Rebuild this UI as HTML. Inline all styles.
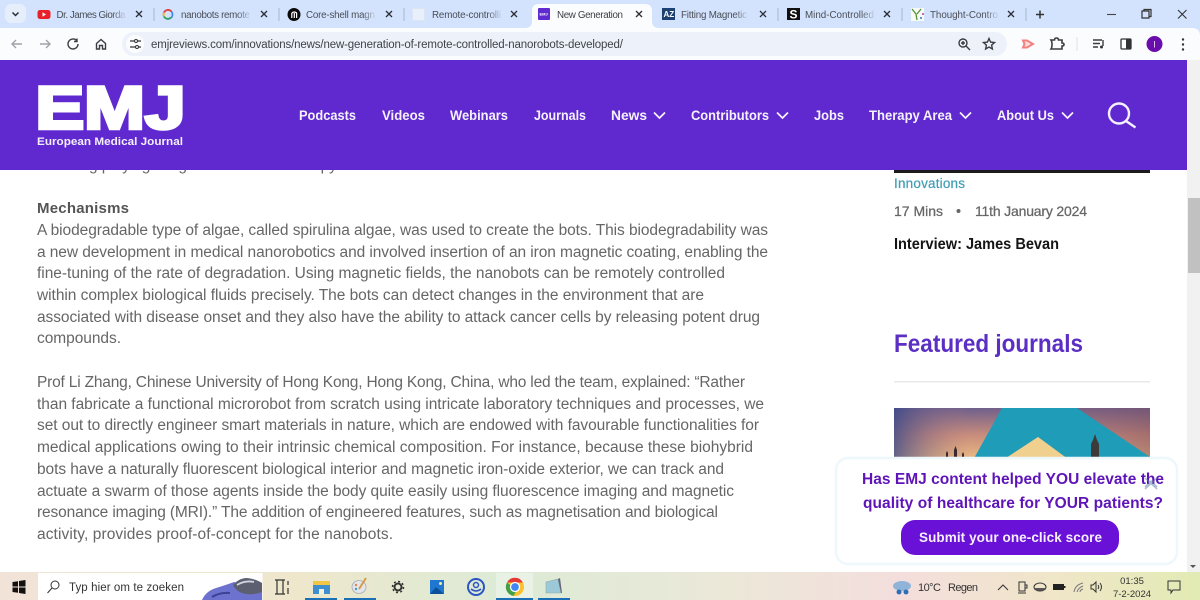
<!DOCTYPE html>
<html><head><meta charset="utf-8"><title>New Generation of Remote-Controlled Nanorobots Developed</title>
<style>
html,body{margin:0;padding:0;width:1200px;height:600px;overflow:hidden;background:#fff}
svg{display:block;position:absolute;left:0;top:0;filter:blur(.3px)}
text{font-family:"Liberation Sans",sans-serif}
.tab{font-size:9.8px;fill:#4a4e55}
.x{stroke:#2a2d33;stroke-width:1.3;fill:none}
.sep{stroke:#a5b7d3;stroke-width:1}
.b{font-size:15.5px;fill:#666}
.n{font-size:13.5px;font-weight:700;fill:#f6f2fd}
.c{stroke:#f6f2fd;stroke-width:1.7;fill:none}
.ic{stroke:#3a3d42;stroke-width:1.4;fill:none}
.tb{stroke:#333;stroke-width:1;fill:none}
.pop{font-size:15.5px;font-weight:700;fill:#5f14b8}
</style></head>
<body>
<svg width="1200" height="600" viewBox="0 0 1200 600" xmlns="http://www.w3.org/2000/svg">
<defs>
<linearGradient id="sky" x1="0" y1="0" x2="0" y2="1"><stop offset="0" stop-color="#6d5f8c"/><stop offset=".5" stop-color="#c98d7c"/><stop offset="1" stop-color="#eec084"/></linearGradient>
<linearGradient id="sky2" x1="0" y1="0" x2="1" y2="0"><stop offset="0" stop-color="#34468a" stop-opacity=".75"/><stop offset=".3" stop-color="#b47a80" stop-opacity="0"/><stop offset="1" stop-color="#7a4a5c" stop-opacity=".45"/></linearGradient>
<linearGradient id="task" x1="0" y1="0" x2="1" y2="0"><stop offset="0" stop-color="#f1e3d8"/><stop offset=".25" stop-color="#eee7cc"/><stop offset=".42" stop-color="#dcebd6"/><stop offset=".6" stop-color="#ebe8d8"/><stop offset=".75" stop-color="#f4dedd"/><stop offset=".88" stop-color="#f0e6c8"/><stop offset="1" stop-color="#e2ebb4"/></linearGradient>
<linearGradient id="fade" x1="0" y1="0" x2="1" y2="0"><stop offset="0" stop-color="#d3e3fd" stop-opacity="0"/><stop offset="1" stop-color="#d3e3fd"/></linearGradient>
</defs>

<!-- Page body text -->
<text class="b" x="37" y="170" textLength="303">including playing a significant role in therapy.</text>
<text x="37" y="213" font-size="15" font-weight="700" fill="#555" textLength="92">Mechanisms</text>
<text class="b" x="37" y="235" textLength="731">A biodegradable type of algae, called spirulina algae, was used to create the bots. This biodegradability was</text>
<text class="b" x="37" y="257" textLength="731">a new development in medical nanorobotics and involved insertion of an iron magnetic coating, enabling the</text>
<text class="b" x="37" y="278" textLength="688">fine-tuning of the rate of degradation. Using magnetic fields, the nanobots can be remotely controlled</text>
<text class="b" x="37" y="300" textLength="667">within complex biological fluids precisely. The bots can detect changes in the environment that are</text>
<text class="b" x="37" y="322" textLength="723">associated with disease onset and they also have the ability to attack cancer cells by releasing potent drug</text>
<text class="b" x="37" y="343" textLength="84">compounds.</text>
<text class="b" x="37" y="387" textLength="708">Prof Li Zhang, Chinese University of Hong Kong, Hong Kong, China, who led the team, explained: “Rather</text>
<text class="b" x="37" y="409" textLength="727">than fabricate a functional microrobot from scratch using intricate laboratory techniques and processes, we</text>
<text class="b" x="37" y="430" textLength="722">set out to directly engineer smart materials in nature, which are endowed with favourable functionalities for</text>
<text class="b" x="37" y="452" textLength="716">medical applications owing to their intrinsic chemical composition. For instance, because these biohybrid</text>
<text class="b" x="37" y="474" textLength="687">bots have a naturally fluorescent biological interior and magnetic iron-oxide exterior, we can track and</text>
<text class="b" x="37" y="496" textLength="697">actuate a swarm of those agents inside the body quite easily using fluorescence imaging and magnetic</text>
<text class="b" x="37" y="517" textLength="681">resonance imaging (MRI).” The addition of engineered features, such as magnetisation and biological</text>
<text class="b" x="37" y="539" textLength="356">activity, provides proof-of-concept for the nanobots.</text>

<!-- Sidebar -->
<rect x="894" y="168" width="256" height="5" fill="#1d1a1c"/>
<text x="894" y="188" font-size="13.5" fill="#3e9db5" stroke="#3e9db5" stroke-width=".2" textLength="71">Innovations</text>
<text x="894" y="216" font-size="14" fill="#666" stroke="#666" stroke-width=".25" textLength="49">17 Mins</text>
<circle cx="958.500" cy="211" r="2" fill="#666"/>
<text x="975" y="216" font-size="14" fill="#666" stroke="#666" stroke-width=".25" textLength="112">11th January 2024</text>
<text x="894" y="249" font-size="15.500" font-weight="700" fill="#151515" textLength="165" lengthAdjust="spacingAndGlyphs">Interview: James Bevan</text>
<text x="894" y="352" font-size="25" font-weight="700" fill="#5b2fc4" textLength="189" lengthAdjust="spacingAndGlyphs">Featured journals</text>
<rect x="894" y="381" width="256" height="1.500" fill="#e9e9e9"/>
<rect x="894" y="408" width="256" height="54" fill="url(#sky)"/>
<rect x="894" y="408" width="256" height="54" fill="url(#sky2)"/>
<path d="M946 458v-5l1-2 1 2v5zM954 458v-8l1.500-4 1.500 4v8zM962 458v-4l1-2 1 2v4z" fill="#3a2a30"/>
<path d="M1002 408h75l73 49v5h-78l-34-25-38 25h-28z" fill="#1f9cb8"/>
<path d="M1038 437l34 25h-72z" fill="#efd08e"/>
<path d="M1091 458v-14l2-4 2-6 2 6 2 4v14z" fill="#3d3a3a"/>

<!-- Scrollbar -->
<rect x="1187" y="60" width="13" height="512" fill="#f1f1f1"/>
<rect x="1188" y="198" width="12" height="75" fill="#c1c1c1"/>
<path d="M1190 565h6l-3 3z" fill="#555"/>

<!-- Header -->
<rect x="0" y="60" width="1187" height="110" fill="#5f29cf"/>
<text x="35.500" y="128.500" font-size="60" font-weight="700" fill="#fff" stroke="#fff" stroke-width="3.500" textLength="150" lengthAdjust="spacingAndGlyphs">EMJ</text>
<text x="37" y="145" font-size="11" font-weight="700" fill="#f3eefc" textLength="146" lengthAdjust="spacingAndGlyphs">European Medical Journal</text>
<text class="n" x="299" y="120" textLength="57" lengthAdjust="spacingAndGlyphs">Podcasts</text>
<text class="n" x="382" y="120" textLength="43" lengthAdjust="spacingAndGlyphs">Videos</text>
<text class="n" x="450" y="120" textLength="58" lengthAdjust="spacingAndGlyphs">Webinars</text>
<text class="n" x="534" y="120" textLength="52" lengthAdjust="spacingAndGlyphs">Journals</text>
<text class="n" x="611" y="120" textLength="36" lengthAdjust="spacingAndGlyphs">News</text>
<path class="c" d="M654 112.500l5.500 5.500 5.500-5.500"/>
<text class="n" x="691" y="120" textLength="78" lengthAdjust="spacingAndGlyphs">Contributors</text>
<path class="c" d="M777 112.500l5.500 5.500 5.500-5.500"/>
<text class="n" x="814" y="120" textLength="30" lengthAdjust="spacingAndGlyphs">Jobs</text>
<text class="n" x="869" y="120" textLength="83" lengthAdjust="spacingAndGlyphs">Therapy Area</text>
<path class="c" d="M960 112.500l5.500 5.500 5.500-5.500"/>
<text class="n" x="997" y="120" textLength="57" lengthAdjust="spacingAndGlyphs">About Us</text>
<path class="c" d="M1062 112.500l5.500 5.500 5.500-5.500"/>
<circle cx="1119" cy="113.500" r="10" fill="none" stroke="#f6f2fd" stroke-width="2.400"/>
<path d="M1126 121l9.500 6.500" stroke="#f6f2fd" stroke-width="2.400" fill="none"/>

<!-- Browser chrome -->
<rect width="1200" height="28" fill="#d3e3fd"/>
<rect y="28" width="1200" height="32" fill="#fbfcfe"/>
<path d="M1192 28q8 0 8 8v-8z" fill="#d3e3fd"/>
<rect x="5" y="4" width="21" height="19" rx="6" fill="#e6eefc"/>
<path class="x" style="stroke-width:1.500" d="M12.500 12.500l3 3 3-3"/>

<rect x="37.500" y="10" width="13" height="9" rx="2.500" fill="#e8202a"/><path d="M42.500 12.300l3.500 2.200-3.500 2.200z" fill="#fff"/>
<text class="tab" x="56.500" y="18" textLength="69">Dr. James Giorda</text>
<rect x="112" y="8" width="15" height="13" fill="url(#fade)"/>
<path class="x" d="M136 11l6 6M142 11l-6 6"/>
<line class="sep" x1="154" y1="8" x2="154" y2="21"/>

<circle cx="168" cy="14.500" r="4.500" fill="none" stroke="#4285f4" stroke-width="1.700"/><path d="M171.500 11.500a4.500 4.500 0 0 0-7.500 1" fill="none" stroke="#ea4335" stroke-width="1.700"/><path d="M164 12.500a4.500 4.500 0 0 0 0 4" fill="none" stroke="#fbbc05" stroke-width="1.700"/><path d="M164 16.500a4.500 4.500 0 0 0 7 1" fill="none" stroke="#34a853" stroke-width="1.700"/>
<text class="tab" x="181" y="18" textLength="69">nanobots remote</text>
<rect x="237" y="8" width="15" height="13" fill="url(#fade)"/>
<path class="x" d="M261 11l6 6M267 11l-6 6"/>
<line class="sep" x1="279" y1="8" x2="279" y2="21"/>

<circle cx="294" cy="14.500" r="6.500" fill="#0a0a0a"/><path d="M291.800 18v-5M294.300 18v-5M291.800 13q2.500-2 4.800 0v5" stroke="#fff" stroke-width="1.200" fill="none"/>
<text class="tab" x="306" y="18" textLength="69">Core-shell magn</text>
<rect x="362" y="8" width="15" height="13" fill="url(#fade)"/>
<path class="x" d="M386 11l6 6M392 11l-6 6"/>
<line class="sep" x1="404" y1="8" x2="404" y2="21"/>

<rect x="412.500" y="8.500" width="12" height="12" fill="#e9f0fb" stroke="#dbe5f3"/>
<text class="tab" x="432" y="18" textLength="69">Remote-controlli</text>
<rect x="488" y="8" width="15" height="13" fill="url(#fade)"/>
<path class="x" d="M511 11l6 6M517 11l-6 6"/>

<path d="M525 28q7 0 7-7V11q0-7 7-7h106q7 0 7 7v10q0 7 7 7z" fill="#fbfcfe"/>
<rect x="538" y="8" width="12" height="12" rx="1" fill="#5f2bd0"/>
<text x="539.500" y="15.500" font-size="4" font-weight="700" fill="#fff">EMJ</text>
<text class="tab" x="557" y="18" textLength="66" style="fill:#3c4045">New Generation</text>
<path class="x" d="M636 11l6 6M642 11l-6 6"/>

<rect x="662" y="8" width="13" height="12" fill="#1d4170"/><text x="663.500" y="17" font-size="8" font-weight="700" fill="#fff">AZ</text>
<text class="tab" x="681" y="18" textLength="66">Fitting Magnetic</text>
<rect x="735" y="8" width="14" height="13" fill="url(#fade)"/>
<path class="x" d="M760 11l6 6M766 11l-6 6"/>
<line class="sep" x1="778" y1="8" x2="778" y2="21"/>

<rect x="787" y="8" width="13" height="12" fill="#111"/><text x="789.500" y="18.500" font-size="12" font-weight="700" fill="#fff">S</text>
<text class="tab" x="805" y="18" textLength="69">Mind-Controlled</text>
<rect x="861" y="8" width="15" height="13" fill="url(#fade)"/>
<path class="x" d="M884 11l6 6M890 11l-6 6"/>
<line class="sep" x1="902" y1="8" x2="902" y2="21"/>

<rect x="911" y="8" width="13" height="13" fill="#f7fbf5"/><path d="M912 9l4 5 1 6M921 9l-4 5" stroke="#5a8f3a" stroke-width="1.300" fill="none"/><circle cx="923" cy="14" r="1" fill="#c03a8a"/><circle cx="921" cy="18" r="1" fill="#2a76c0"/>
<text class="tab" x="930" y="18" textLength="68">Thought-Contro</text>
<rect x="985" y="8" width="15" height="13" fill="url(#fade)"/>
<path class="x" d="M1008 11l6 6M1014 11l-6 6"/>
<line class="sep" x1="1026" y1="8" x2="1026" y2="21"/>
<path d="M1036 14.500h8M1040 10.500v8" stroke="#333" stroke-width="1.500" fill="none"/>
<path d="M1107 14.500h9" stroke="#444" stroke-width="1.100"/>
<path d="M1142 11h7v7h-7zM1144 11V9.500h7v7h-2" stroke="#333" stroke-width="1.200" fill="none"/>
<path d="M1178 10l8.500 8.500M1186.500 10l-8.500 8.500" stroke="#333" stroke-width="1.100" fill="none"/>

<!-- Toolbar -->
<path class="ic" style="stroke:#a0a4aa" d="M22 44H12M16 40l-4 4 4 4"/>
<path class="ic" style="stroke:#a0a4aa" d="M40 44h10M46 40l4 4-4 4"/>
<path class="ic" d="M78 44a5 5 0 1 1-1.500-3.600M77 38.500v3h-3"/>
<path class="ic" d="M96.500 43.500l4.500-4 4.500 4v5.500h-3v-3.500h-3v3.500h-3z"/>
<rect x="122" y="32" width="885" height="24" rx="12" fill="#edf2fa"/>
<circle cx="135" cy="44" r="9" fill="#fbfcfe"/>
<path d="M130 41h4M130 47h5M137 41h4M139 47h2" stroke="#333" stroke-width="1.200" fill="none"/><circle cx="136" cy="41" r="1.500" fill="none" stroke="#333"/><circle cx="137" cy="47" r="1.500" fill="none" stroke="#333"/>
<text x="151" y="48" font-size="11.500" fill="#3f4248" textLength="472">emjreviews.com/innovations/news/new-generation-of-remote-controlled-nanorobots-developed/</text>
<circle cx="963" cy="43" r="4" class="ic"/><path class="ic" d="M966 46l4 4M961 43h4M963 41v4"/>
<path d="M989 38.500l1.600 3.600 3.900.4-2.900 2.600.8 3.900-3.400-2-3.400 2 .8-3.900-2.900-2.600 3.900-.4z" class="ic"/>
<path d="M1023 40.500h4l6 3.500-6 3.500h-4l1.500-3.500z" fill="#fbdcdc" stroke="#f0827f" stroke-width="2"/>
<path class="ic" style="stroke-width:1.600" d="M1051 40h3.500q0-2 2-2t2 2h3.500v3q2 0 2 1.500t-2 1.500v3h-11q1-1.500 1-4.500t-1-4.500z"/>
<line x1="1077" y1="37" x2="1077" y2="51" stroke="#dde3ea"/>
<path class="ic" d="M1093 40h9M1093 43.500h7M1093 47h5M1103 40v6"/><circle cx="1101.500" cy="47" r="1.500" fill="#333"/>
<rect x="1121" y="39" width="10" height="10" rx="1" fill="#fff" stroke="#333" stroke-width="1.300"/><rect x="1126" y="39" width="5" height="10" fill="#333"/>
<circle cx="1154.500" cy="44" r="8" fill="#6a0dad"/><text x="1154.500" y="47.500" font-size="9" fill="#eadcf7" text-anchor="middle">I</text>
<circle cx="1183" cy="39.500" r="1.200" fill="#333"/><circle cx="1183" cy="44.500" r="1.200" fill="#333"/><circle cx="1183" cy="49.500" r="1.200" fill="#333"/>

<!-- Popup -->
<rect x="836" y="458" width="341" height="106" rx="12" fill="#fff" stroke="#eef7fc" stroke-width="2.500"/>
<text class="pop" x="862" y="484" textLength="302">Has EMJ content helped YOU elevate the</text>
<text class="pop" x="863" y="508" textLength="300">quality of healthcare for YOUR patients?</text>
<path d="M1145 487l6-6 6 6M1145 478l12 11M1157 478l-12 11" stroke="#5a7fa8" stroke-opacity=".55" stroke-width="1.500" fill="none"/>
<rect x="901" y="520" width="218" height="35" rx="14" fill="#6a11d8"/>
<text x="919" y="542" font-size="13.500" font-weight="700" fill="#f6effd" textLength="183">Submit your one-click score</text>

<!-- Taskbar -->
<rect y="572" width="1200" height="28" fill="url(#task)"/>
<path d="M12.500 582l5.500-.8v5.300h-5.500zM19 581l6.500-1v6.500H19zM12.500 587.500H18v5.300l-5.500-.8zM19 587.500h6.500v6.500l-6.500-1z" fill="#111"/>
<rect x="38" y="573" width="224.500" height="27" fill="#fff"/>
<circle cx="55" cy="585" r="4" class="tb"/><path class="tb" d="M52 588l-4.500 5"/>
<text x="69" y="591" font-size="11.500" fill="#333" textLength="115">Typ hier om te zoeken</text>
<path d="M202 600q4-9 14-12t18-6l28 8v10z" fill="#6d72cf"/>
<path d="M212 597q8-5 18-4" stroke="#3c4296" stroke-width="2" fill="none"/>
<path d="M233 585q6-7 14-7 9 1 15 5v9q-7 3-15 2-10-1-14-9z" fill="#5c5f70"/>
<path d="M237 585q8-5 17-3" stroke="#d1d4de" stroke-width="1.800" fill="none"/>

<path class="tb" style="stroke-width:1.200" d="M275 580h10M275 594h10M277 580v14M283 580v14M288 581v4M288 588v6"/>
<rect x="313" y="581" width="17" height="11" fill="#f3c545"/><rect x="313" y="585" width="17" height="9" fill="#3d8fd0"/><rect x="319" y="589" width="5" height="5" fill="#f4efd8"/>
<ellipse cx="359" cy="587" rx="7" ry="6.500" fill="#e3e6ea" stroke="#a7aab0" stroke-width=".8"/><path d="M359 589l7-11" stroke="#d69a4d" stroke-width="2"/><circle cx="356" cy="585" r="1.200" fill="#d84"/><circle cx="356" cy="589" r="1.200" fill="#49c"/>
<circle cx="398" cy="587" r="3.500" fill="none" stroke="#333" stroke-width="2"/><circle cx="398" cy="587" r="5.500" fill="none" stroke="#333" stroke-width="1.500" stroke-dasharray="2 2.300"/>
<rect x="430" y="580" width="14" height="14" fill="#1f77cf"/><path d="M430 594l6-7 8 7z" fill="#0d4f9a"/><circle cx="440.500" cy="583.500" r="1.500" fill="#ffe9a8"/>
<circle cx="476" cy="587" r="8" fill="none" stroke="#2b55c4" stroke-width="2"/><circle cx="476" cy="585" r="2.500" fill="none" stroke="#2b55c4" stroke-width="1.500"/><path d="M471 589q5 4 10 0" stroke="#2b55c4" stroke-width="1.500" fill="none"/>
<rect x="496" y="573" width="37" height="27" fill="#fff" fill-opacity=".35"/>
<circle cx="515" cy="587" r="9" fill="#fbc02d"/><path d="M507 582.500a9 9 0 0 1 15.800 0H515z" fill="#e53935"/><path d="M507 582.500a9 9 0 0 0 6.500 13.400l3.500-6z" fill="#43a047"/><circle cx="515" cy="587" r="4.500" fill="#4285f4" stroke="#fff" stroke-width="1.300"/>
<path d="M546 582l12-3 3 14h-15z" fill="#9cc9d8" stroke="#8aa" stroke-width=".6"/><path d="M558 579l3 14h1l-2-15z" fill="#667"/>
<rect x="305" y="598" width="32" height="2" fill="#1a6fb5"/><rect x="344" y="598" width="32" height="2" fill="#1a6fb5"/><rect x="496" y="598" width="37" height="2" fill="#1a6fb5"/><rect x="538" y="598" width="32" height="2" fill="#1a6fb5"/>

<ellipse cx="902" cy="586" rx="9" ry="5" fill="#8fb4d8"/><circle cx="899" cy="592" r="2.500" fill="#2c6fb5"/><circle cx="906" cy="592" r="2.500" fill="#2c6fb5"/>
<text x="918" y="591" font-size="11" fill="#333" textLength="23">10°C</text>
<text x="948" y="591" font-size="11" fill="#333" textLength="30">Regen</text>
<path class="tb" d="M998 590l5-5 5 5"/>
<rect x="1019" y="582" width="6" height="9" class="tb"/><path class="tb" d="M1018 593h8M1025 585h2v3h-2"/>
<ellipse cx="1040" cy="587" rx="6" ry="4" class="tb"/><path d="M1034 588h12v1.500q-6 2-12 0z" fill="#555"/>
<rect x="1053" y="584" width="11" height="6" fill="#222"/><rect x="1064" y="586" width="1.500" height="2" fill="#222"/>
<path d="M1074 592q1-7 9-9M1077 592q1-4 6-6M1080 592q0-2 3-3" stroke="#777" stroke-width="1" fill="none"/>
<path class="tb" d="M1091 585h2l3-3v10l-3-3h-2zM1098 585q1.500 2 0 4M1100 583q3 4 0 8"/>
<text x="1132" y="584" font-size="9.500" fill="#333" text-anchor="middle">01:35</text>
<text x="1132" y="597" font-size="9.500" fill="#333" text-anchor="middle">7-2-2024</text>
<path class="tb" d="M1168 581h12v9h-7l-2 3v-3h-3z"/>
</svg>
</body></html>
